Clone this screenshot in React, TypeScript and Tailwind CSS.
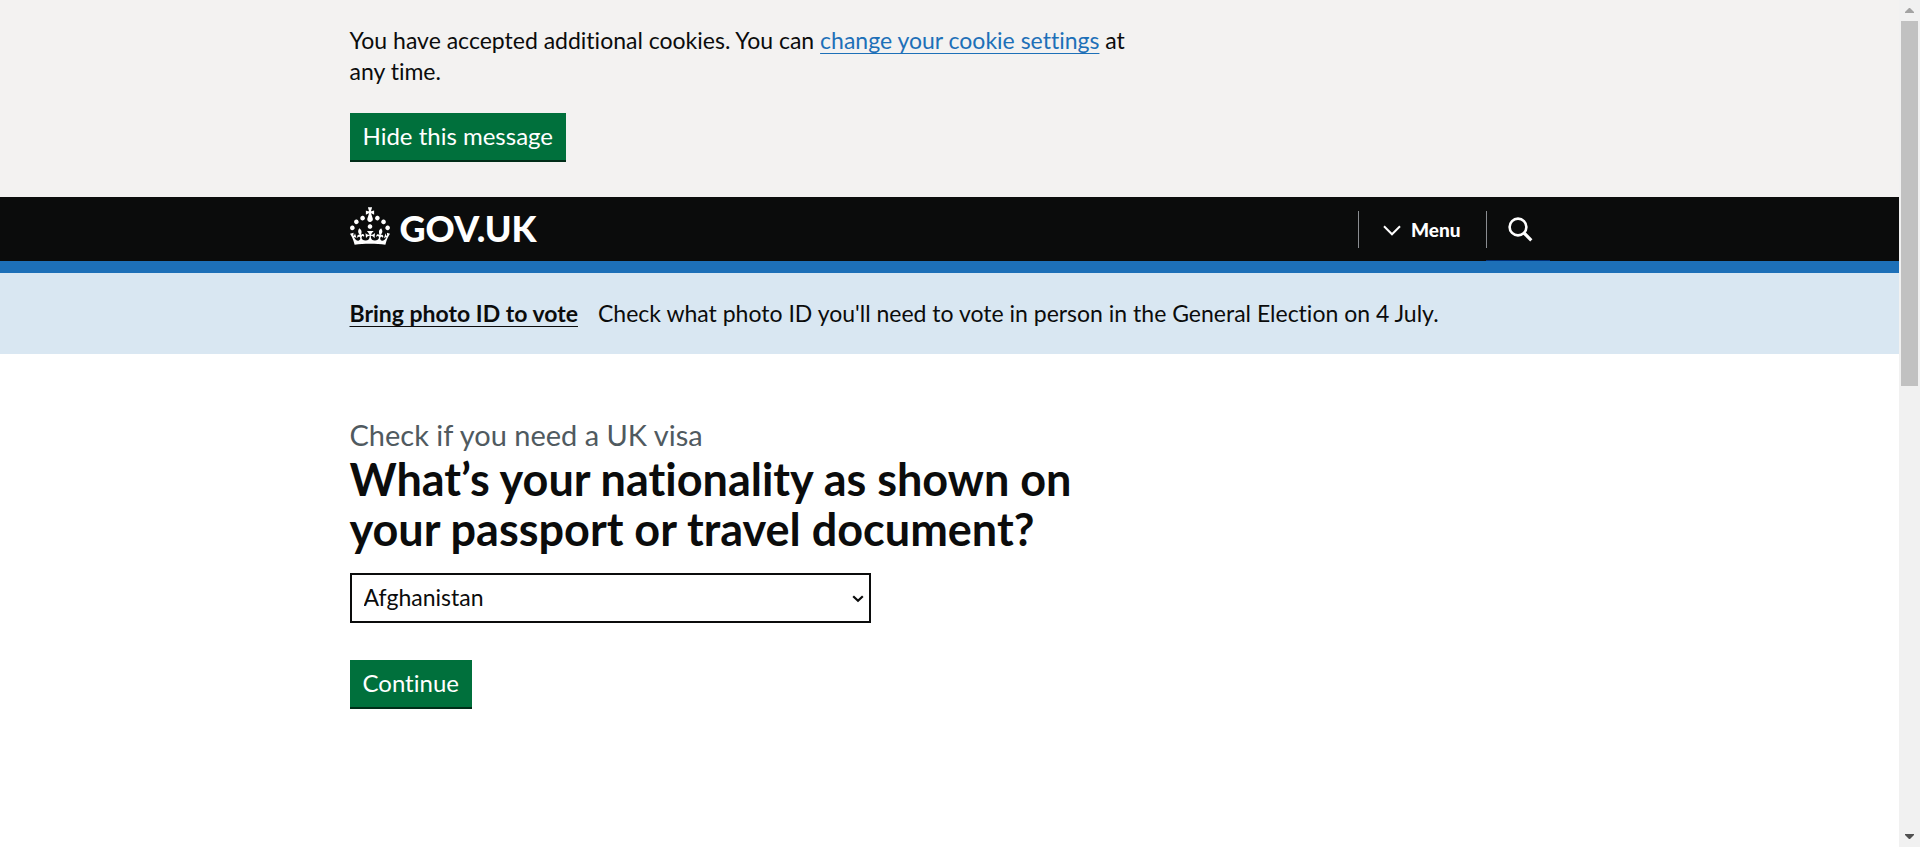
import React from "react";

function Crown() {
  return (
    <svg viewBox="0 0 32 30" className="h-[38px] w-10 shrink-0" fill="currentColor" aria-hidden="true">
      <path d="M22.6 10.4c-1 .4-2-.1-2.4-1-.4-.9.1-2 1-2.4.9-.4 2 .1 2.4 1s-.1 2-1 2.4m-5.9 6.7c-.9.4-2-.1-2.4-1-.4-.9.1-2 1-2.4.9-.4 2 .1 2.4 1s-.1 2-1 2.4m10.8-3.7c-1 .4-2-.1-2.4-1-.4-.9.1-2 1-2.4.9-.4 2 .1 2.4 1s0 2-1 2.4m3.3 4.8c-1 .4-2-.1-2.4-1-.4-.9.1-2 1-2.4.9-.4 2 .1 2.4 1s-.1 2-1 2.4M17 4.7l2.3 1.2V2.5l-2.3.7-.2-.2.9-3h-3.4l.9 3-.2.2c-.1.1-2.3-.7-2.3-.7v3.4L15 4.7c.1.1.1.2.2.2l-1.3 4c-.1.2-.1.4-.1.6 0 1.1.8 2 1.9 2.2h.7c1-.2 1.9-1.1 1.9-2.1 0-.2 0-.4-.1-.6l-1.3-4c-.1-.2 0-.2.1-.3m-7.6 5.7c.9.4 2-.1 2.4-1 .4-.9-.1-2-1-2.4-.9-.4-2 .1-2.4 1s0 2 1 2.4m-5 3c.9.4 2-.1 2.4-1 .4-.9-.1-2-1-2.4-.9-.4-2 .1-2.4 1s.1 2 1 2.4m-3.2 4.8c.9.4 2-.1 2.4-1 .4-.9-.1-2-1-2.4-.9-.4-2 .1-2.4 1s0 2 1 2.4m14.8 11c4.4 0 8.6.3 12.3.8 1.1-4.5 2.4-7 3.7-8.8l-2.5-.9c.2 1.3.3 1.9 0 2.7-.4-.4-.8-1.1-1.1-2.3l-1.2 4c.7-.5 1.3-.8 2-.9-1.1 2.5-2.6 3.1-3.5 3-1.1-.2-1.7-1.2-1.5-2.1.3-1.2 1.5-1.5 2.1-.1 1.1-2.3-.8-3-2-2.3 1.9-1.9 2.1-3.5.6-5.6-2.1 1.6-2.1 3.2-1.2 5.5-1.2-1.4-3.2-.6-2.5 1.6.9-1.4 2.1-.5 1.9.8-.2 1.1-1.7 2.1-3.5 1.9-2.7-.2-2.9-2.1-2.9-3.6.7-.1 1.9.5 2.9 1.9l.4-4.3c-1.1 1.1-2.1 1.4-3.2 1.4.4-1.2 2.1-3 2.1-3h-5.4s1.7 1.9 2.1 3c-1.1 0-2.1-.2-3.2-1.4l.4 4.3c1-1.4 2.2-2 2.9-1.9-.1 1.5-.2 3.4-2.9 3.6-1.9.2-3.4-.8-3.5-1.9-.2-1.3 1-2.2 1.9-.8.7-2.3-1.2-3-2.5-1.6.9-2.2.9-3.9-1.2-5.5-1.5 2-1.3 3.7.6 5.6-1.2-.7-3.1 0-2 2.3.6-1.4 1.8-1.1 2.1.1.2.9-.3 1.9-1.5 2.1-.9.2-2.4-.5-3.5-3 .6 0 1.2.3 2 .9l-1.2-4c-.3 1.1-.7 1.9-1.1 2.3-.3-.8-.2-1.4 0-2.7l-2.9.9C1.3 23 2.6 25.5 3.7 30c3.7-.5 7.9-.8 12.3-.8" />
    </svg>
  );
}

function Container({ children, className = "" }: { children: React.ReactNode; className?: string }) {
  return <div className={"mx-auto w-full max-w-[1200px] " + className}>{children}</div>;
}

function GreenButton({ children, type = "button" }: { children: React.ReactNode; type?: "button" | "submit" }) {
  return (
    <button
      type={type}
      className="block h-[47px] cursor-pointer bg-[#00703c] px-[13px] pb-0.5 text-2xl leading-6 text-white shadow-[0_2px_0_#002d18]"
    >
      {children}
    </button>
  );
}

function CookieBanner() {
  return (
    <section aria-label="Cookies on GOV.UK" className="bg-[#f3f2f1] pt-[25px] pb-[37px]">
      <Container>
        <p className="max-w-[790px] text-[23px] leading-[31px]">
          You have accepted additional cookies. You can{" "}
          <a
            href="#cookies"
            className="text-[#1d70b8] underline decoration-1 underline-offset-4 [text-decoration-skip-ink:none]"
          >
            change your cookie settings
          </a>{" "}
          at <span className="whitespace-nowrap">any time.</span>
        </p>
        <div className="mt-[26px] flex">
          <GreenButton>Hide this message</GreenButton>
        </div>
      </Container>
    </section>
  );
}

function Header() {
  return (
    <header className="border-b-[12px] border-[#1d70b8] bg-[#0b0c0c] text-white">
      <Container className="flex h-16 items-stretch justify-between">
        <a href="#home" className="flex items-center gap-[10px] pb-1.5">
          <Crown />
          <span className="pt-1 text-4xl leading-none font-black">GOV.UK</span>
        </a>
        <nav aria-label="Menu" className="flex">
          <button type="button" className="flex cursor-pointer items-center py-[14px] text-[19px] font-black">
            <span className="flex h-[37px] items-center gap-[10px] border-l border-[#8a8d91] pt-0.5 pr-[25px] pl-6">
              <svg viewBox="0 0 18 11" className="h-[11px] w-[18px]" fill="none" stroke="currentColor" strokeWidth="2" aria-hidden="true">
                <path d="M1 1.3 9 9.3 17 1.3" />
              </svg>
              Menu
            </span>
          </button>
          <button
            type="button"
            aria-label="Search GOV.UK"
            className="flex w-16 cursor-pointer items-center border-b border-[#003078] pt-px"
          >
            <span className="flex h-[37px] items-center border-l border-[#8a8d91] pl-[21px]">
              <svg viewBox="0 0 25 25" className="h-[25px] w-[25px]" fill="none" stroke="currentColor" aria-hidden="true">
                <circle cx="10" cy="10" r="8.4" strokeWidth="2.6" />
                <path d="m16 16 7.3 7.3" strokeWidth="3.2" />
              </svg>
            </span>
          </button>
        </nav>
      </Container>
    </header>
  );
}

function ElectionBanner() {
  return (
    <section aria-label="Election notice" className="bg-[#d9e7f2] py-[25px]">
      <Container>
        <p className="text-[23px] leading-[31px]">
          <a
            href="#photo-id"
            className="mr-5 font-bold underline decoration-1 underline-offset-4 [text-decoration-skip-ink:none]"
          >
            Bring photo ID to vote
          </a>
          Check what photo ID you'll need to vote in person in the General Election on 4 July.
        </p>
      </Container>
    </section>
  );
}

function Question() {
  return (
    <main>
      <Container className="pt-[63px] pb-16">
        <form onSubmit={(event) => event.preventDefault()}>
          <span className="mb-px block text-[29px] leading-9 text-[#505a5f]">Check if you need a UK visa</span>
          <h1 className="max-w-[790px] text-[45px] leading-[50px] font-bold">
            <label htmlFor="nationality">What’s your nationality as shown on your passport or travel document?</label>
          </h1>
          <div className="relative mt-[19px] w-[521px] max-w-full">
            <select
              id="nationality"
              defaultValue="Afghanistan"
              className="block h-[50px] w-full appearance-none border-2 border-[#0b0c0c] bg-white pr-8 pb-0.5 pl-3 text-[23px]"
            >
              <option>Afghanistan</option>
              <option>Albania</option>
              <option>Algeria</option>
              <option>Andorra</option>
            </select>
            <svg
              viewBox="0 0 12 8"
              className="pointer-events-none absolute top-[22px] right-[7px] h-2 w-3"
              fill="none"
              stroke="currentColor"
              strokeWidth="2.2"
              aria-hidden="true"
            >
              <path d="m1.2 1.2 4.8 4.6 4.8-4.6" />
            </svg>
          </div>
          <div className="mt-[37px] flex">
            <GreenButton type="submit">Continue</GreenButton>
          </div>
        </form>
      </Container>
    </main>
  );
}

function ScrollRail() {
  return (
    <div aria-hidden="true" className="flex w-[21px] shrink-0 flex-col items-center bg-[#f1f1f1]">
      <div className="flex h-[21px] shrink-0 items-center">
        <svg viewBox="0 0 9 5" className="h-[5px] w-[9px]" fill="#a3a3a3">
          <path d="M4 0h1l4 4v1H0V4z" />
        </svg>
      </div>
      <div className="flex w-[17px] flex-1 flex-col">
        <div className="h-[45.4%] bg-[#c1c1c1]" />
      </div>
      <div className="flex h-[21px] shrink-0 items-center">
        <svg viewBox="0 0 9 5" className="h-[5px] w-[9px]" fill="#505050">
          <path d="M4 5h1l4-4V0H0v1z" />
        </svg>
      </div>
    </div>
  );
}

export default function App() {
  return (
    <div className="flex min-h-screen bg-white font-['Lato',sans-serif] text-[#0b0c0c] [font-variant-ligatures:no-common-ligatures]">
      <div className="min-w-0 flex-1">
        <CookieBanner />
        <Header />
        <ElectionBanner />
        <Question />
      </div>
      <ScrollRail />
    </div>
  );
}
